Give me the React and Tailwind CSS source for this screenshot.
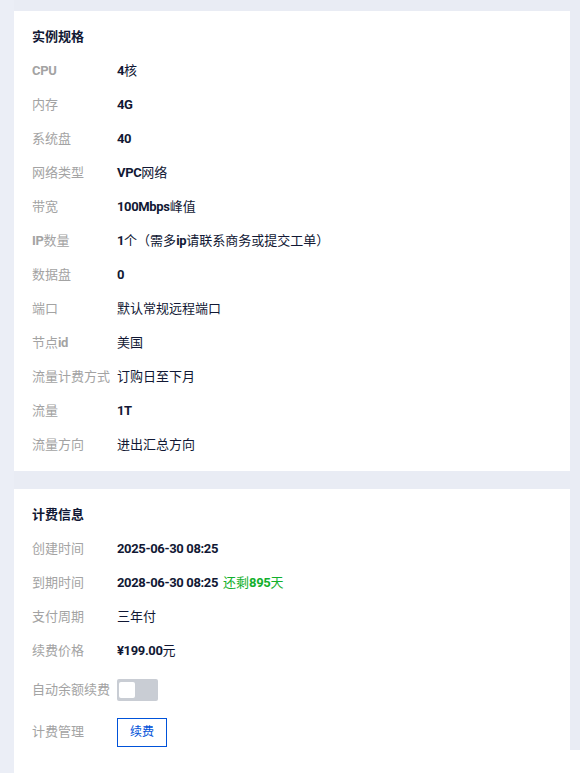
import React from 'react';

const font = { fontFamily: 'Roboto, "Noto Sans CJK SC", sans-serif' };

const B = ({ children }) => <b className="font-bold tracking-[-0.35px]">{children}</b>;

const specRows = [
  { key: 'cpu', label: <B>CPU</B>, value: <><B>4</B>核</> },
  { key: 'mem', label: '内存', value: <B>4G</B> },
  { key: 'disk', label: '系统盘', value: <B>40</B> },
  { key: 'net', label: '网络类型', value: <><B>VPC</B>网络</> },
  { key: 'bw', label: '带宽', value: <><B>100Mbps</B>峰值</> },
  { key: 'ip', label: <><B>IP</B>数量</>, value: <><B>1</B>个（需多<B>ip</B>请联系商务或提交工单）</> },
  { key: 'data', label: '数据盘', value: <B>0</B> },
  { key: 'port', label: '端口', value: '默认常规远程端口' },
  { key: 'node', label: <>节点<B>id</B></>, value: '美国' },
  { key: 'billing', label: '流量计费方式', value: '订购日至下月' },
  { key: 'traffic', label: '流量', value: <B>1T</B> },
  { key: 'dir', label: '流量方向', value: '进出汇总方向' },
];

const Row = ({ label, children }) => (
  <div className="flex h-[34px] items-center">
    <div className="w-[85px] shrink-0 text-[#a3a3a3]">{label}</div>
    <div className="flex items-center text-[#111834]">{children}</div>
  </div>
);

const Card = ({ title, children, className = '' }) => (
  <div className={`bg-white px-[18px] pt-[9px] ${className}`}>
    <div className="flex h-[34px] items-center font-bold text-[#111834]">{title}</div>
    {children}
  </div>
);

export default function App() {
  return (
    <div className="flex h-[773px] overflow-hidden bg-white text-[13px]" style={font}>
      <div className="w-[14px] shrink-0 bg-[#ebeef6]" />
      <div className="flex w-[556px] shrink-0 flex-col gap-[18px] bg-[#e9ecf4] pt-[11px]">
        <Card title="实例规格" className="pb-[9px]">
          {specRows.map((r) => (
            <Row key={r.key} label={r.label}>{r.value}</Row>
          ))}
        </Card>

        <Card title="计费信息" className="h-[320px] shrink-0">
          <Row label="创建时间">
            <B>2025-06-30 08:25</B>
          </Row>
          <Row label="到期时间">
            <B>2028-06-30 08:25</B>
            <span className="ml-[5px] text-[#12b02c]">
              还剩<B>895</B>天
            </span>
          </Row>
          <Row label="支付周期">三年付</Row>
          <Row label="续费价格">
            <B>¥199.00</B>元
          </Row>
          <div className="flex h-[41px] items-center pt-[3px]">
            <div className="w-[85px] shrink-0 text-[#a3a3a3]">自动余额续费</div>
            <button className="flex h-[22px] w-[41px] items-center rounded-[2px] bg-[#c9cdd4] pl-[2px]">
              <span className="block h-[16px] w-[16px] rounded-[2px] bg-white" />
            </button>
          </div>
          <div className="flex h-[46px] items-center">
            <div className="w-[85px] shrink-0 text-[#a3a3a3]">计费管理</div>
            <button className="flex h-[29px] w-[50px] items-center justify-center border border-[#0052d9] text-[12px] text-[#0052d9]">
              续费
            </button>
          </div>
        </Card>
      </div>
      <div className="h-[750px] w-[10px] shrink-0 bg-[#e9ecf4]" />
    </div>
  );
}
